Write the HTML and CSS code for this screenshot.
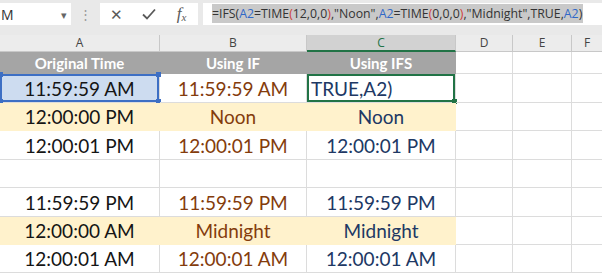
FILE: index.html
```html
<!DOCTYPE html>
<html lang="en">
<head>
    <meta charset="UTF-8">
    <title>IFS with TIME</title>
    <link rel="stylesheet" href="styles.css">
</head>
<body>
    <!-- Formula bar -->
    <div class="toolbar">
        <div class="name-box">
            <span class="name-text">M</span>
            <span class="drop">&#9662;</span>
        </div>
        <div class="grip">&#8942;</div>
        <div class="fx-box">
            <span class="fx-btn">&#10005;</span>
            <span class="fx-btn">
                <svg width="14" height="12" viewBox="0 0 14 12"><path d="M1 6.5 L5 10.5 L13 1.5" fill="none" stroke="#5a5a5a" stroke-width="1.8"/></svg>
            </span>
            <span class="fx-btn fx">f<span class="fx-x">x</span></span>
        </div>
        <div class="formula">
            <span class="sel">=IFS(<span class="ref">A2</span>=TIME<span class="par">(</span>12,0,0<span class="par">)</span>,"Noon",<span class="ref">A2</span>=TIME<span class="par">(</span>0,0,0<span class="par">)</span>,"Midnight",TRUE,<span class="ref">A2</span>)</span>
        </div>
    </div>

    <!-- Sheet -->
    <div class="sheet">
        <div class="colhead">A</div>
        <div class="colhead">B</div>
        <div class="colhead active">C</div>
        <div class="colhead">D</div>
        <div class="colhead">E</div>
        <div class="colhead last">F</div>

        <div class="cell title">Original Time</div>
        <div class="cell title">Using IF</div>
        <div class="cell title">Using IFS</div>
        <div class="cell"></div><div class="cell"></div><div class="cell last"></div>

        <div class="cell orig ref-cell">11:59:59 AM
            <span class="handle tl"></span><span class="handle tr"></span>
            <span class="handle bl"></span><span class="handle br"></span>
        </div>
        <div class="cell viaif">11:59:59 AM</div>
        <div class="cell viaifs editing">TRUE,A2)<span class="handle gr"></span></div>
        <div class="cell"></div><div class="cell"></div><div class="cell last"></div>

        <div class="cell orig hl">12:00:00 PM</div>
        <div class="cell viaif hl">Noon</div>
        <div class="cell viaifs hl">Noon</div>
        <div class="cell"></div><div class="cell"></div><div class="cell last"></div>

        <div class="cell orig">12:00:01 PM</div>
        <div class="cell viaif">12:00:01 PM</div>
        <div class="cell viaifs">12:00:01 PM</div>
        <div class="cell"></div><div class="cell"></div><div class="cell last"></div>

        <div class="cell"></div><div class="cell"></div><div class="cell"></div>
        <div class="cell"></div><div class="cell"></div><div class="cell last"></div>

        <div class="cell orig">11:59:59 PM</div>
        <div class="cell viaif">11:59:59 PM</div>
        <div class="cell viaifs">11:59:59 PM</div>
        <div class="cell"></div><div class="cell"></div><div class="cell last"></div>

        <div class="cell orig hl">12:00:00 AM</div>
        <div class="cell viaif hl">Midnight</div>
        <div class="cell viaifs hl">Midnight</div>
        <div class="cell"></div><div class="cell"></div><div class="cell last"></div>

        <div class="cell orig">12:00:01 AM</div>
        <div class="cell viaif">12:00:01 AM</div>
        <div class="cell viaifs">12:00:01 AM</div>
        <div class="cell"></div><div class="cell"></div><div class="cell last"></div>
    </div>
</body>
</html>
```

FILE: styles.css
```css
body {
    margin: 0;
    padding: 0;
    width: 602px;
    height: 279px;
    overflow: hidden;
    background: #ffffff;
    font-family: Lato, "Open Sans", sans-serif;
}
.toolbar {
    height: 35px;
    background: #e9e9e9;
    display: flex;
    align-items: flex-start;
    padding-top: 3px;
    box-sizing: border-box;
}
.name-box {
    width: 71px;
    height: 22px;
    background: #fff;
    display: flex;
    align-items: center;
    justify-content: space-between;
    box-sizing: border-box;
    padding: 0 4px 0 1px;
    font-family: "Open Sans", sans-serif;
    font-size: 14px;
    color: #333;
}
.drop {
    font-size: 11px;
    color: #666;
}
.grip {
    width: 29px;
    text-align: center;
    color: #9a9a9a;
    font-size: 13px;
    line-height: 22px;
}
.fx-box {
    width: 98px;
    height: 22px;
    background: #fff;
    display: flex;
    align-items: center;
    justify-content: space-around;
    color: #5a5a5a;
    font-size: 15px;
}
.fx-btn {
    width: 30px;
    text-align: center;
    display: flex;
    justify-content: center;
}
.fx {
    font-family: "Liberation Serif", serif;
    font-style: italic;
    font-size: 17px;
    align-items: baseline;
}
.fx-x {
    font-size: 11px;
    position: relative;
    top: 2px;
}
.formula {
    margin-left: 5px;
    flex: 1;
    height: 22px;
    background: #fff;
    padding: 1px 0 0 9px;
    box-sizing: border-box;
    font-family: "Open Sans", sans-serif;
    font-size: 12.3px;
    color: #333;
    white-space: nowrap;
}
.sel {
    background: #c9c9c9;
    display: inline-block;
    line-height: 19px;
    padding-right: 1px;
}
.ref {
    color: #3068c8;
}
.par {
    color: #d0403a;
}
.sheet {
    display: grid;
    grid-template-columns: 160px 147px 149px 57px 59px 30px;
    grid-template-rows: 17px 22px 29px 28px 29px 28px 29px 28px 28px;
}
.colhead {
    background: #ececec;
    border-right: 1px solid #c8c8c8;
    border-bottom: 1px solid #c8c8c8;
    text-align: center;
    font-family: "Open Sans", sans-serif;
    font-size: 12px;
    line-height: 16px;
    color: #444;
}
.colhead.active {
    background: #d2d2d2;
    color: #217346;
    border-bottom: 2px solid #217346;
}
.cell {
    position: relative;
    border-right: 1px solid #dcdcdc;
    border-bottom: 1px solid #dcdcdc;
    display: flex;
    align-items: center;
    justify-content: center;
    font-size: 19px;
    white-space: nowrap;
}
.last {
    border-right: none;
}
.title {
    background: #a5a5a5;
    color: #fff;
    font-weight: bold;
    font-size: 15px;
    border-color: #a5a5a5;
}
.orig {
    color: #151515;
}
.viaif {
    color: #843c0c;
}
.viaifs {
    color: #203864;
}
.hl {
    background: #fff2cc;
    border-color: #fff2cc;
}
.ref-cell {
    background: #cddcf0;
    box-shadow: inset 0 0 0 2px #3d6fc4;
}
.editing {
    justify-content: flex-start;
    padding-left: 4px;
    box-shadow: inset 0 0 0 2px #217346;
}
.handle {
    position: absolute;
    width: 5px;
    height: 5px;
    background: #3d6fc4;
}
.tl { left: -2px; top: -2px; }
.tr { right: -2px; top: -2px; }
.bl { left: -2px; bottom: -2px; }
.br { right: -2px; bottom: -2px; }
.gr {
    right: -2px;
    bottom: -2px;
    background: #217346;
}
```
